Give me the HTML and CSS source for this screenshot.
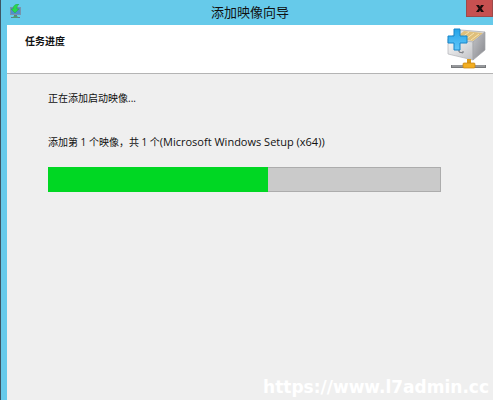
FILE: index.html
```html
<!DOCTYPE html>
<html lang="zh-CN">
<head>
    <meta charset="UTF-8">
    <meta name="viewport" content="width=device-width, initial-scale=1.0">
    <title>添加映像向导</title>
    <link rel="stylesheet" href="styles.css">
</head>
<body>

    <div class="window">
        <div class="titlebar">
            <svg class="app-icon" width="14" height="16" viewBox="0 0 14 16">
                <rect x="1" y="3" width="11" height="8" fill="#7895ad"/>
                <rect x="2" y="4" width="9" height="6" fill="#4f8fca"/>
                <path d="M5 11h3v2h3v1H2v-1h3z" fill="#65798a"/>
                <path d="M10 0C6 0 4 2 4 5H2l4 4 4-4H8c0-2 0-3 2-5z" fill="#27d94d" stroke="#2f9c50" stroke-width=".5"/>
                <path d="M4 13h5" stroke="#37bd61"/>
            </svg>
            <h1 class="title">添加映像向导</h1>
            <button class="close" type="button" aria-label="关闭">
                <svg width="8" height="7" viewBox="0 0 8 8" preserveAspectRatio="none">
                    <path d="M0 0h3l1 2 1-2h3L5.500 4 8 8H5L4 6 3 8H0l2.500-4z" fill="#1c0c0c"/>
                </svg>
            </button>
        </div>

        <div class="header">
            <h2>任务进度</h2>
            <svg class="header-icon" width="40" height="42" viewBox="0 0 40 42">
                <defs>
                    <linearGradient id="front" x1="0" y1="0" x2="1" y2="1">
                        <stop offset="0" stop-color="#fafafa"/>
                        <stop offset="1" stop-color="#bfc0c4"/>
                    </linearGradient>
                    <linearGradient id="side" x1="0" y1="0" x2="1" y2="1">
                        <stop offset="0" stop-color="#c4c5c9"/>
                        <stop offset="1" stop-color="#85868b"/>
                    </linearGradient>
                    <linearGradient id="plus" x1="0" y1="0" x2="0" y2="1">
                        <stop offset="0" stop-color="#24a4e8"/>
                        <stop offset="1" stop-color="#62c7fa"/>
                    </linearGradient>
                </defs>
                <!-- drawer with folders -->
                <path d="M1 12L14 3l24 2-12 10z" fill="#dfe0e2" stroke="#a2a4a8" stroke-width=".7"/>
                <path d="M8 11l9-7 19 2-10 8z" fill="#dfbf7a"/>
                <path d="M14 11l8-6M19 12l8-6M24 13l8-6" stroke="#f5e3b0"/>
                <path d="M1 12l25 3v18L1 27z" fill="url(#front)" stroke="#b2b3b7" stroke-width=".7"/>
                <path d="M26 15l12-10v18l-12 10z" fill="url(#side)" stroke="#a2a3a7" stroke-width=".7"/>
                <path d="M12 23v2l4 1v-2" fill="none" stroke="#72757b"/>
                <!-- network line -->
                <rect x="4" y="38" width="35" height="3" fill="#77797c"/>
                <path d="M5 39h33" stroke="#b5b7ba"/>
                <rect x="20" y="32" width="4" height="5" fill="#d99a1c"/>
                <rect x="16" y="36" width="12" height="5" rx="1" fill="#f2ae22" stroke="#c5830c" stroke-width=".7"/>
                <path d="M7 2h6v7h7v7h-7v7H7v-7H1V9h6z" fill="url(#plus)" stroke="#1684c8"/>
            </svg>
        </div>

        <div class="content">
            <p class="status">正在添加启动映像...</p>
            <label class="detail" for="imageProgress">添加第 1 个映像，共 1 个<span class="image-name">(Microsoft Windows Setup (x64))</span></label>
            <progress id="imageProgress" value="56" max="100"></progress>
        </div>

        <div class="watermark">https://www.l7admin.cc</div>
    </div>

</body>
</html>
```
FILE: styles.css
```css
* {
    box-sizing: border-box;
}
body {
    margin: 0;
    font-family: "Open Sans", "Noto Sans CJK SC", sans-serif;
    font-size: 10px;
    color: #111;
}
h1, h2, p {
    margin: 0;
}
.window {
    position: relative;
    display: flex;
    flex-direction: column;
    min-height: 100vh;
    padding-left: 6px;
    border-left: 1px solid #3d5563;
    background-color: #66caea;
}
.titlebar {
    display: grid;
    grid-template-columns: 27px 1fr 27px;
    height: 25px;
}
.app-icon {
    margin: 4px 0 0 2px;
}
.title {
    font-size: 13px;
    font-weight: normal;
    line-height: 24px;
    text-align: center;
}
.close {
    display: flex;
    align-items: center;
    justify-content: center;
    height: 17px;
    padding: 0;
    border: 1px solid #9c4a4a;
    border-top: 0;
    background-color: #c75050;
}
.header {
    display: flex;
    justify-content: space-between;
    height: 49px;
    padding: 2px 6px 0 18px;
    border-bottom: 1px solid #b4b4b4;
    background-color: #fff;
}
.header h2 {
    font-size: 10px;
    line-height: 28px;
}
.content {
    flex: 1;
    padding: 16px 52px 0 41px;
    background-color: #efefef;
}
.status {
    line-height: 16px;
}
.detail {
    display: block;
    margin-top: 28px;
    line-height: 16px;
}
.image-name {
    font-size: 11px;
}
progress {
    display: block;
    appearance: none;
    width: 100%;
    height: 25px;
    margin-top: 17px;
    border: 0;
}
progress::-webkit-progress-bar {
    background-color: #cacaca;
    box-shadow: inset 0 0 0 1px #acacac;
}
progress::-webkit-progress-value {
    background-color: #00d723;
}
.watermark {
    position: absolute;
    right: 4px;
    bottom: 3px;
    font-family: "DejaVu Sans", sans-serif;
    font-size: 17px;
    font-weight: bold;
    line-height: 20px;
    color: #fff;
}
```
